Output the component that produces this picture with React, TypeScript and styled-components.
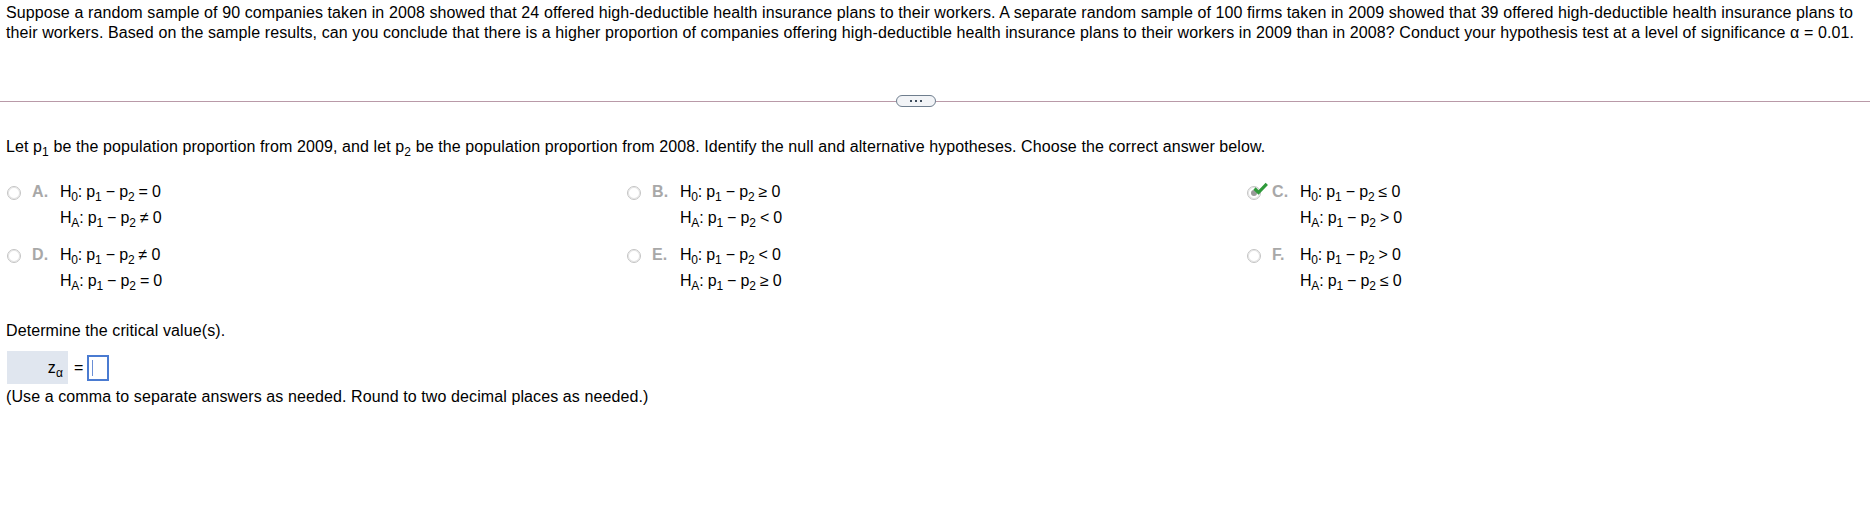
import React from "react";
import styled, { createGlobalStyle } from "styled-components";

const GlobalStyle = createGlobalStyle`
  html, body { margin: 0; padding: 0; background: #ffffff; }
  body {
    font-family: "Liberation Sans", Arial, Helvetica, sans-serif;
    color: #000000;
  }
`;

const Page = styled.div`
  width: 1876px;
  box-sizing: border-box;
  padding-top: 3px;
  font-size: 16px;
  line-height: 20px;
  letter-spacing: 0.1px;
`;

const Section = styled.div`
  padding: 0 8px 0 6px;
`;

const Question = styled.p`
  margin: 0;
`;

const Divider = styled.div`
  display: flex;
  align-items: center;
  height: 12px;
  margin-top: 52px;
  padding-right: 6px;
`;

const Rule = styled.div<{ $fixed?: number }>`
  height: 1px;
  background: #b99aa8;
  flex: ${(p) => (p.$fixed ? `0 0 ${p.$fixed}px` : "1 1 auto")};
`;

const MoreButton = styled.button`
  width: 40px;
  height: 12px;
  box-sizing: border-box;
  padding: 0;
  border: 1px solid #6f7e8e;
  border-radius: 6px;
  background: #f2f4f7;
  display: flex;
  align-items: center;
  justify-content: center;
  gap: 3px;
`;

const Dot = styled.span`
  width: 2px;
  height: 2px;
  background: #3f4d5c;
`;

const Prompt = styled.p`
  margin: 30px 0 0;
`;

const Sub = styled.sub`
  font-size: 12px;
  line-height: 0;
  vertical-align: -4px;
`;

const OptionsGrid = styled.div`
  display: grid;
  grid-template-columns: repeat(3, 620px);
  row-gap: 11px;
  margin-top: 22px;
  margin-left: 1px;
`;

const Option = styled.div`
  display: flex;
  align-items: flex-start;
`;

const RadioWrap = styled.span`
  position: relative;
  flex: 0 0 14px;
  height: 14px;
  margin-top: 7px;
`;

const Radio = styled.span<{ $checked?: boolean }>`
  display: flex;
  align-items: center;
  justify-content: center;
  width: 14px;
  height: 14px;
  box-sizing: border-box;
  border-radius: 50%;
  border: 1px solid #c4c4c4;
  background: #ffffff;
  box-shadow: inset 0 0 0 1px #e6e6e6;
  &::after {
    content: "";
    display: ${(p) => (p.$checked ? "block" : "none")};
    width: 6px;
    height: 6px;
    border-radius: 50%;
    background: #9a9a9a;
  }
`;

const Check = styled.svg`
  position: absolute;
  left: 6px;
  top: -4px;
  width: 15px;
  height: 13px;
  overflow: visible;
`;

const Letter = styled.span`
  flex: 0 0 28px;
  margin-left: 11px;
  color: #a8a8a8;
  font-weight: bold;
  line-height: 26px;
`;

const Hyp = styled.div`
  line-height: 26px;
  white-space: nowrap;
  letter-spacing: -0.2px;
`;

const Determine = styled.p`
  margin: 27px 0 0;
`;

const AnswerRow = styled.div`
  display: flex;
  align-items: center;
  margin-top: 10px;
  margin-left: 1px;
`;

const Label = styled.div`
  width: 61px;
  height: 33px;
  box-sizing: border-box;
  padding-right: 5px;
  background: #e0e6ef;
  display: flex;
  align-items: center;
  justify-content: flex-end;
`;

const Eq = styled.span`
  margin: 0 4px 0 6px;
`;

const InputBox = styled.span`
  position: relative;
  width: 22px;
  height: 26px;
  box-sizing: border-box;
  border: 2px solid #4a7bd1;
  background: #ffffff;
  &::after {
    content: "";
    position: absolute;
    left: 3px;
    top: 3px;
    bottom: 3px;
    width: 1px;
    background: #6a8fd6;
  }
`;

const Note = styled.p`
  margin: 3px 0 0;
`;

const options: { letter: string; h0: string; ha: string; checked?: boolean }[] = [
  { letter: "A", h0: "=", ha: "≠" },
  { letter: "B", h0: "≥", ha: "<" },
  { letter: "C", h0: "≤", ha: ">", checked: true },
  { letter: "D", h0: "≠", ha: "=" },
  { letter: "E", h0: "<", ha: "≥" },
  { letter: "F", h0: ">", ha: "≤" },
];

const Expr: React.FC<{ h: string; rel: string }> = ({ h, rel }) => (
  <Hyp>
    H<Sub>{h}</Sub>: p<Sub>1</Sub> − p<Sub>2</Sub> {rel} 0
  </Hyp>
);

export default function App() {
  return (
    <Page>
      <GlobalStyle />
      <Section>
        <Question>
          Suppose a random sample of 90 companies taken in 2008 showed that 24 offered high-deductible health insurance
          plans to their workers. A separate random sample of 100 firms taken in 2009 showed that 39 offered
          high-deductible health insurance plans to their workers. Based on the sample results, can you conclude that
          there is a higher proportion of companies offering high-deductible health insurance plans to their workers in
          2009 than in 2008? Conduct your hypothesis test at a level of significance α = 0.01.
        </Question>
      </Section>
      <Divider>
        <Rule $fixed={896} />
        <MoreButton aria-label="more">
          <Dot />
          <Dot />
          <Dot />
        </MoreButton>
        <Rule />
      </Divider>
      <Section>
        <Prompt>
          Let p<Sub>1</Sub> be the population proportion from 2009, and let p<Sub>2</Sub> be the population proportion
          from 2008. Identify the null and alternative hypotheses. Choose the correct answer below.
        </Prompt>
        <OptionsGrid>
          {options.map((o) => (
            <Option key={o.letter}>
              <RadioWrap>
                <Radio $checked={o.checked} />
                {o.checked && (
                  <Check viewBox="0 0 15 13">
                    <path
                      d="M1.5 6.5 L5.5 10.5 L13.8 1.8"
                      fill="none"
                      stroke="#2f9a3a"
                      strokeWidth="3.2"
                      strokeLinecap="butt"
                      strokeLinejoin="miter"
                    />
                  </Check>
                )}
              </RadioWrap>
              <Letter>{o.letter}.</Letter>
              <div>
                <Expr h="0" rel={o.h0} />
                <Expr h="A" rel={o.ha} />
              </div>
            </Option>
          ))}
        </OptionsGrid>
        <Determine>Determine the critical value(s).</Determine>
        <AnswerRow>
          <Label>
            <span>
              z<Sub>α</Sub>
            </span>
          </Label>
          <Eq>=</Eq>
          <InputBox />
        </AnswerRow>
        <Note>(Use a comma to separate answers as needed. Round to two decimal places as needed.)</Note>
      </Section>
    </Page>
  );
}
